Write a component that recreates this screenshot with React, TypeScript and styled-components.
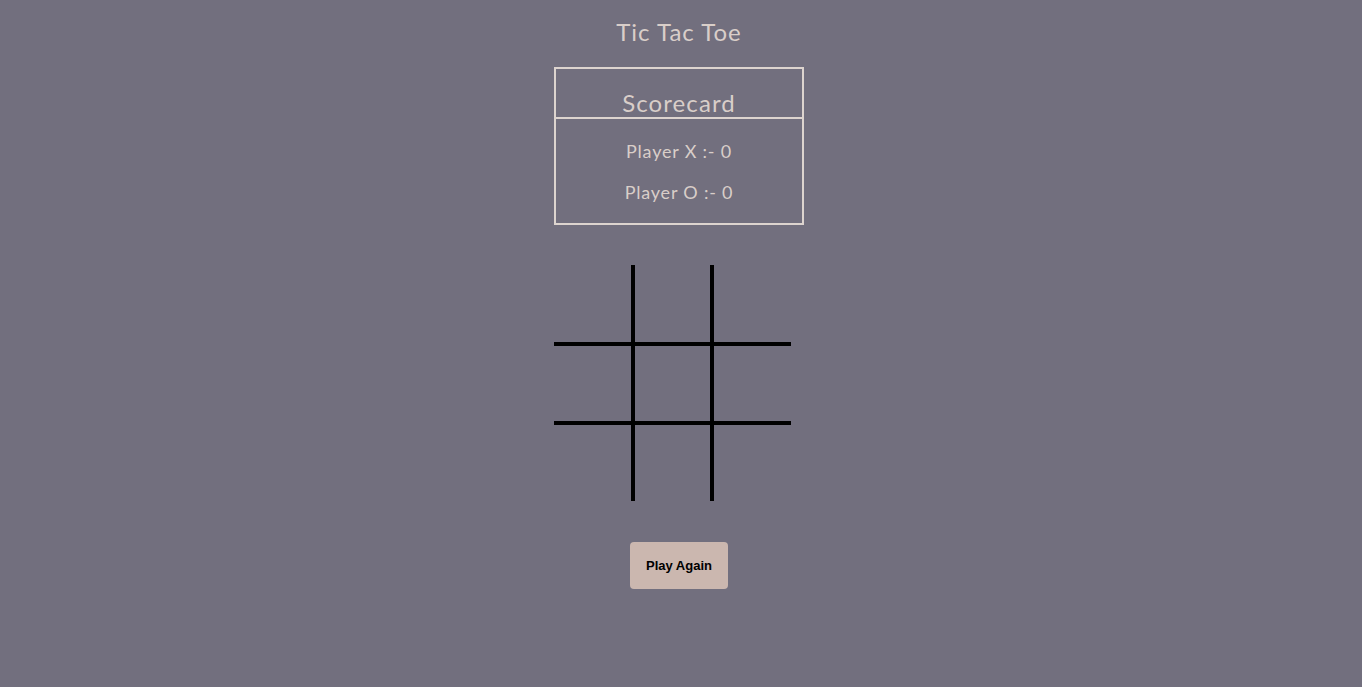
import React, { useState } from 'react';
import styled, { createGlobalStyle } from 'styled-components';

const GlobalStyle = createGlobalStyle`
  *, *::before, *::after {
    box-sizing: border-box;
  }

  html, body {
    margin: 0;
    padding: 0;
    min-height: 100%;
    background-color: #726f7e;
  }

  body {
    font-family: Lato, 'Open Sans', sans-serif;
    color: #d9cec9;
  }
`;

type Mark = 'X' | 'O' | '';

const Page = styled.div`
  display: flex;
  flex-direction: column;
  align-items: center;
  min-height: 687px;
  padding: 18px 4px 0 0;
`;

const Column = styled.main`
  display: flex;
  flex-direction: column;
  align-items: center;
  width: 250px;
`;

const Title = styled.h1`
  margin: 0;
  font-size: 24px;
  line-height: 28px;
  font-weight: 400;
  letter-spacing: 1px;
`;

const Scorecard = styled.section`
  width: 250px;
  margin-top: 21px;
  border: 2px solid #ddd4cf;
  text-align: center;
`;

const ScoreHeader = styled.h2`
  margin: 0;
  height: 50px;
  padding-top: 22px;
  font-size: 24px;
  line-height: 24px;
  font-weight: 400;
  letter-spacing: 1.1px;
  border-bottom: 2px solid #ddd4cf;
`;

const ScoreBody = styled.div`
  display: flex;
  flex-direction: column;
  gap: 19px;
  padding: 21px 0 20px;
`;

const ScoreLine = styled.p`
  margin: 0;
  font-size: 18px;
  line-height: 22px;
  letter-spacing: 0.8px;
`;

const Board = styled.div`
  align-self: flex-start;
  display: grid;
  grid-template-columns: 77px 83px 77px;
  grid-template-rows: 77px 83px 76px;
  margin-top: 40px;
`;

const Cell = styled.button<{ $col: number; $row: number }>`
  padding: 0;
  margin: 0;
  background: transparent;
  border: 0 solid #000;
  border-left-width: ${({ $col }) => ($col === 1 ? '4px' : '0')};
  border-right-width: ${({ $col }) => ($col === 1 ? '4px' : '0')};
  border-top-width: ${({ $row }) => ($row === 1 ? '4px' : '0')};
  border-bottom-width: ${({ $row }) => ($row === 1 ? '4px' : '0')};
  font-family: Lato, sans-serif;
  font-size: 44px;
  color: #1d1b22;
  cursor: pointer;
`;

const PlayAgain = styled.button`
  margin-top: 41px;
  width: 98px;
  height: 47px;
  padding: 0;
  border: none;
  border-radius: 4px;
  background-color: #cbb7af;
  color: #000;
  font-family: 'Liberation Sans', Arial, sans-serif;
  font-size: 13px;
  font-weight: 700;
  cursor: pointer;
`;

const App = () => {
  const [cells, setCells] = useState<Mark[]>(Array(9).fill(''));
  const [turn, setTurn] = useState<'X' | 'O'>('X');

  const play = (i: number) => {
    if (cells[i]) return;
    const next = [...cells];
    next[i] = turn;
    setCells(next);
    setTurn(turn === 'X' ? 'O' : 'X');
  };

  return (
    <>
      <GlobalStyle />
      <Page>
        <Column>
          <Title>Tic Tac Toe</Title>
          <Scorecard>
            <ScoreHeader>Scorecard</ScoreHeader>
            <ScoreBody>
              <ScoreLine>Player X :- 0</ScoreLine>
              <ScoreLine>Player O :- 0</ScoreLine>
            </ScoreBody>
          </Scorecard>
          <Board>
            {cells.map((mark, i) => (
              <Cell key={i} $col={i % 3} $row={Math.floor(i / 3)} onClick={() => play(i)}>
                {mark}
              </Cell>
            ))}
          </Board>
          <PlayAgain
            onClick={() => {
              setCells(Array(9).fill(''));
              setTurn('X');
            }}
          >
            Play Again
          </PlayAgain>
        </Column>
      </Page>
    </>
  );
};

export default App;
